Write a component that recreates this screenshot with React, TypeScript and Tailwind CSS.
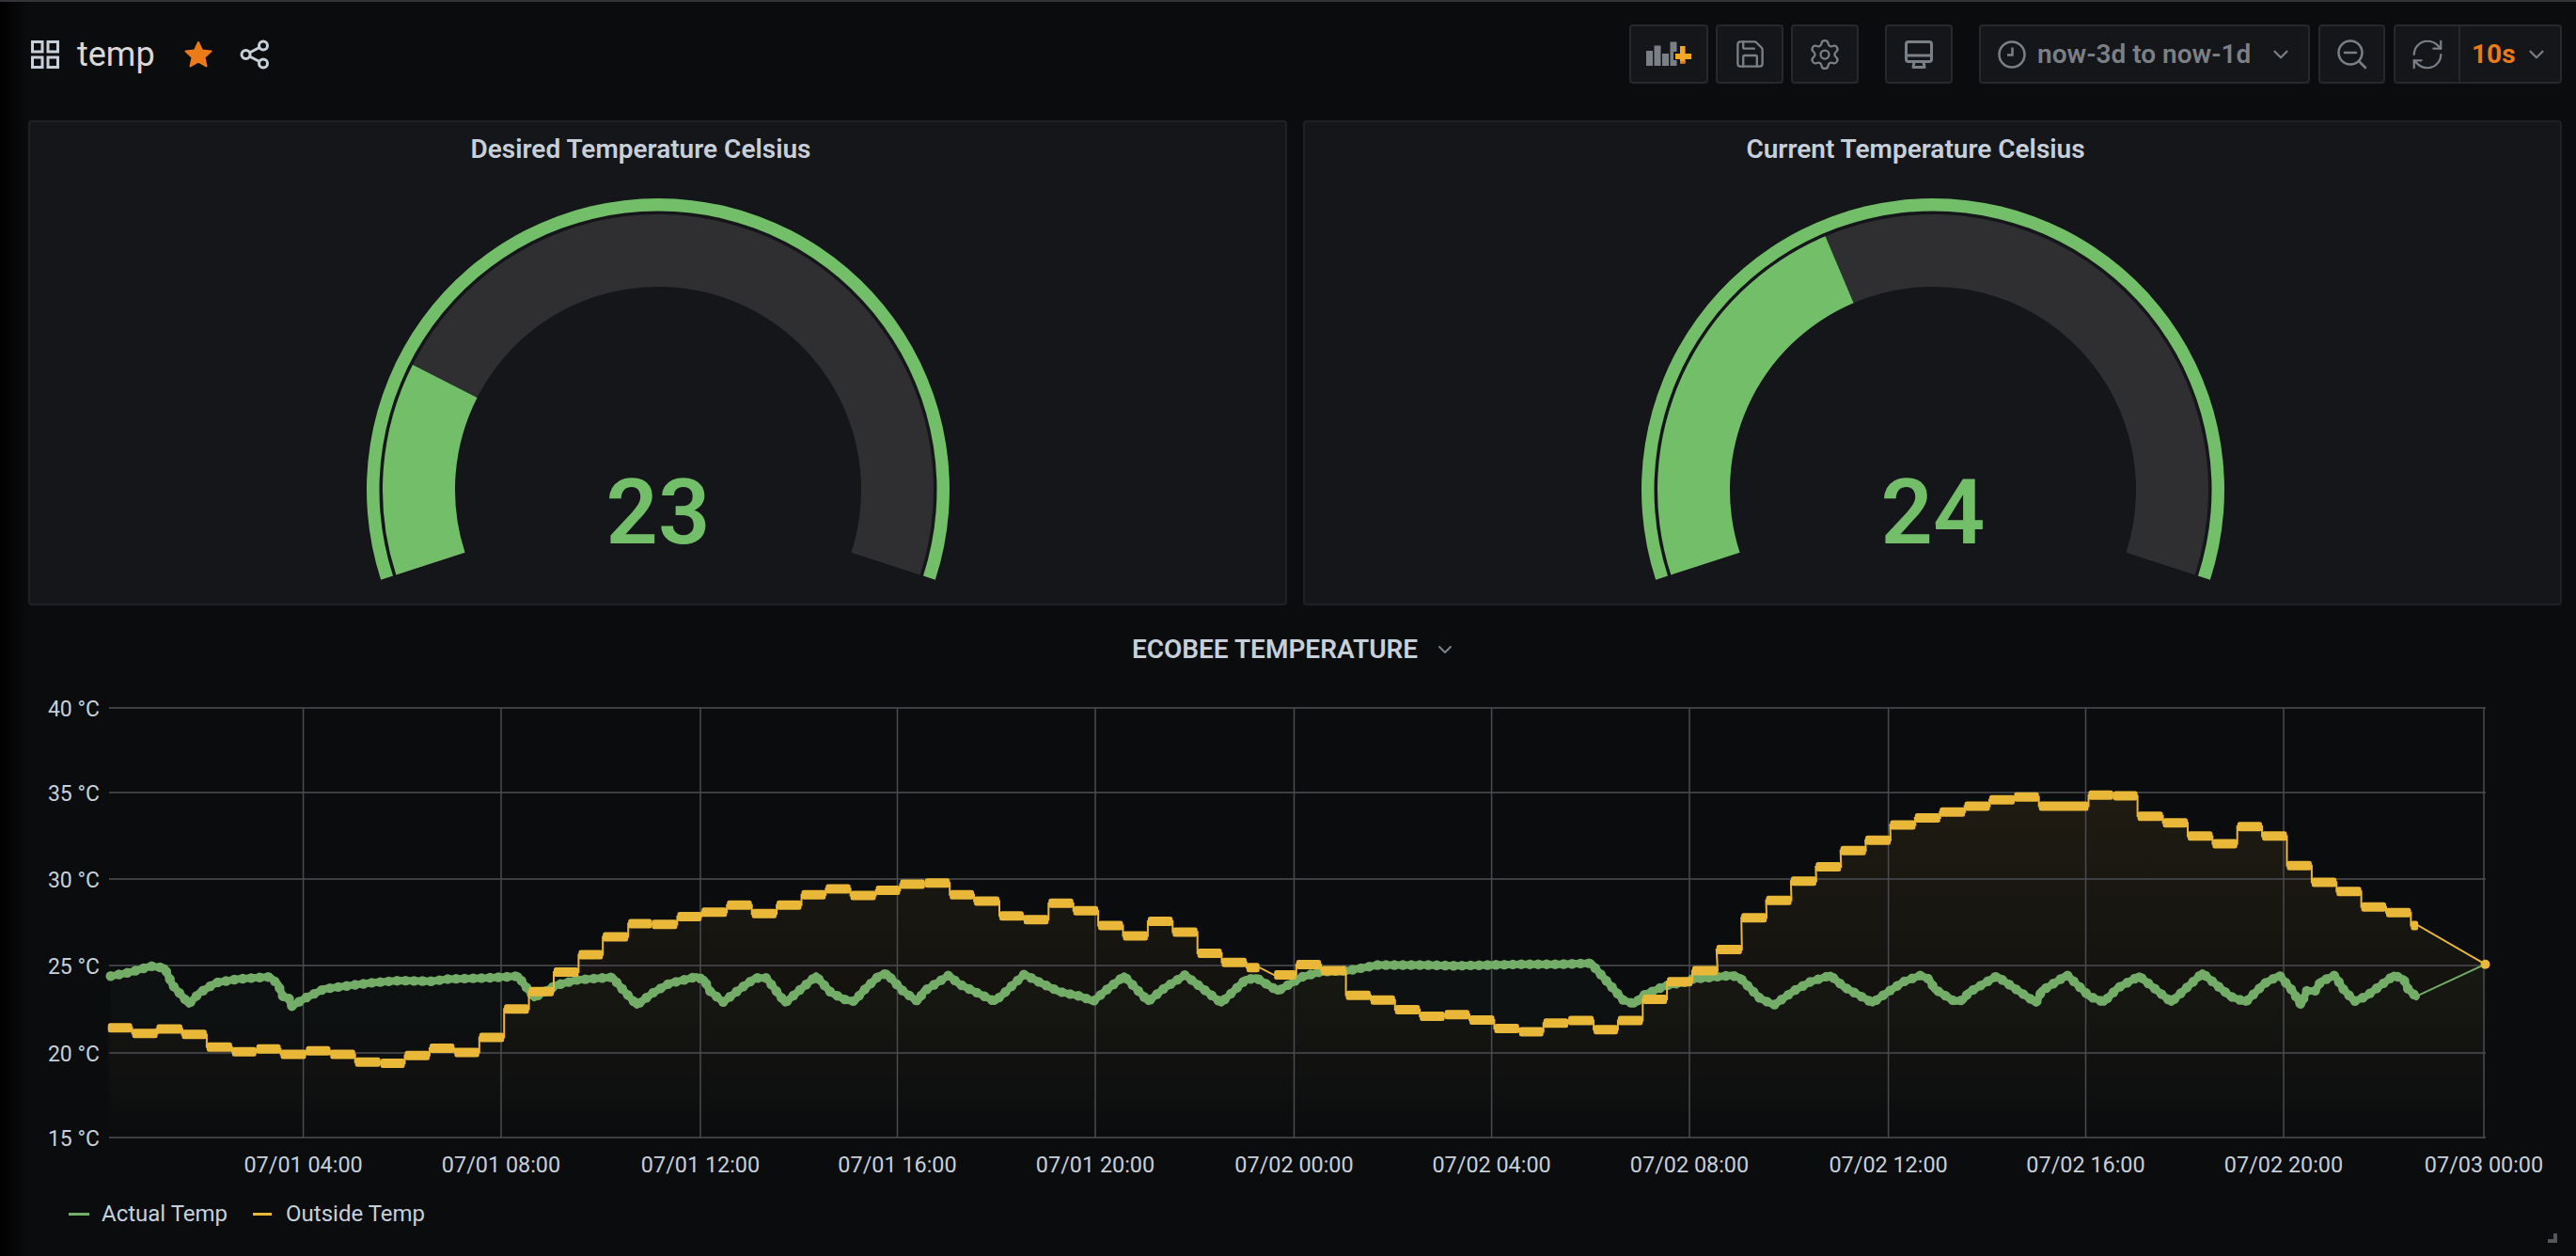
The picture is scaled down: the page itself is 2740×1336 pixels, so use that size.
import { ChevronDown, RefreshCw, Save, Settings } from "lucide-react";

const GREEN = "#73bf69";
const LINE_GREEN = "#73ad68";
const YELLOW = "#eab839";
const PLOT_TOP = 753;
const PLOT_BOTTOM = 1210;
const PLOT_LEFT = 116;
const PLOT_RIGHT = 2644;

// data read off the crops: [x1, x2, y] in crop coordinates, converted below
const y0 = (y: number) => 720 + y / 2.545;
const a = (x: number) => x / 1.742;
const b = (x: number) => 900 + x / 1.742;
const c = (x: number) => 1800 + x / 1.668;

const stepsA = [
  [200, 245, 950], [245, 292, 965], [290, 338, 953], [337, 383, 968], [383, 430, 1002], [430, 475, 1015],
  [475, 520, 1007], [520, 567, 1022], [567, 612, 1012], [612, 658, 1022], [658, 705, 1043], [705, 750, 1046],
  [750, 796, 1025], [796, 842, 1005], [842, 888, 1017], [888, 934, 976], [934, 980, 899], [980, 1026, 852],
  [1026, 1072, 799], [1072, 1117, 752], [1117, 1164, 704], [1164, 1208, 668], [1208, 1255, 670], [1255, 1300, 649],
  [1300, 1347, 637], [1347, 1393, 618], [1393, 1439, 641], [1439, 1485, 618], [1485, 1530, 590], [1530, 1576, 574],
];
const stepsB = [
  [8, 55, 592], [55, 100, 578], [100, 146, 561], [146, 192, 558], [192, 237, 590], [237, 284, 607], [284, 329, 647],
  [329, 375, 657], [375, 421, 613], [421, 467, 633], [467, 513, 673], [513, 559, 701], [559, 605, 662], [605, 651, 691],
  [651, 696, 748], [696, 742, 773], [742, 766, 787], [793, 834, 807], [834, 880, 779], [880, 926, 795], [926, 972, 862],
  [972, 1017, 875], [1017, 1063, 901], [1063, 1109, 919], [1109, 1155, 914], [1155, 1201, 929], [1201, 1247, 952],
  [1247, 1292, 961], [1292, 1338, 937], [1338, 1385, 930], [1385, 1430, 955], [1430, 1476, 930], [1476, 1521, 873],
  [1521, 1568, 825],
];
const stepsC = [
  [0, 45, 795], [43, 88, 738], [87, 132, 652], [131, 176, 605], [175, 220, 553], [219, 264, 514], [263, 308, 470],
  [307, 352, 442], [351, 396, 401], [395, 440, 382], [439, 484, 366], [483, 528, 350], [527, 572, 333], [571, 615, 325],
  [615, 703, 350], [703, 747, 320], [747, 790, 322], [790, 835, 377], [835, 879, 395], [879, 923, 431], [923, 967, 452],
  [967, 1011, 405], [1011, 1055, 431], [1055, 1099, 511], [1099, 1143, 556], [1143, 1187, 581], [1187, 1231, 623],
  [1231, 1275, 638], [1275, 1288, 673],
];
const steps = [
  ...stepsA.map(([x1, x2, y]) => [a(x1), a(x2), y0(y)]),
  ...stepsB.map(([x1, x2, y]) => [b(x1), b(x2), y0(y)]),
  ...stepsC.map(([x1, x2, y]) => [c(x1), c(x2), y0(y)]),
];

const greenA = [
  [205, 810], [240, 800], [280, 783], [305, 788], [312, 810], [320, 835], [350, 885], [370, 855], [400, 828], [440, 818],
  [500, 812], [515, 832], [525, 868], [535, 868], [540, 892], [565, 870], [600, 845], [650, 835], [690, 828], [740, 822],
  [800, 824], [830, 818], [900, 815], [960, 810], [975, 840], [990, 868], [1030, 835], [1070, 820], [1135, 813], [1150, 840],
  [1180, 888], [1210, 855], [1240, 830], [1290, 812], [1305, 820], [1315, 850], [1340, 880], [1380, 835], [1400, 815],
  [1420, 815], [1455, 882], [1480, 850], [1512, 810], [1540, 855], [1568, 875],
];
const greenB = [
  [15, 878], [35, 845], [60, 810], [75, 803], [105, 850], [132, 878], [145, 850], [190, 808], [210, 832], [275, 878],
  [290, 860], [330, 805], [360, 828], [395, 852], [435, 865], [458, 878], [480, 850], [515, 810], [560, 878], [590, 842],
  [628, 807], [695, 882], [740, 820], [760, 815], [800, 850], [845, 812], [880, 798], [930, 795], [985, 780], [1075, 780],
  [1130, 782], [1250, 778], [1320, 778], [1380, 775], [1410, 825], [1440, 875], [1460, 885], [1480, 860], [1520, 835],
  [1560, 825],
];
const greenC = [
  [0, 818], [70, 808], [85, 815], [120, 870], [145, 888], [180, 850], [210, 825], [245, 808], [270, 840], [320, 882],
  [345, 855], [375, 825], [405, 808], [420, 818], [430, 845], [465, 878], [480, 875], [490, 855], [540, 810], [610, 882],
  [620, 850], [665, 807], [705, 865], [730, 880], [755, 842], [793, 810], [850, 880], [905, 802], [955, 865], [982, 880],
  [1015, 830], [1042, 808], [1065, 850], [1080, 888], [1090, 850], [1105, 850], [1115, 825], [1140, 808], [1155, 845],
  [1175, 878], [1195, 865], [1245, 808], [1262, 818], [1270, 845], [1284, 865],
];
const green = [
  ...greenA.map(([x, y]) => [a(x), y0(y)]),
  ...greenB.map(([x, y]) => [b(x), y0(y)]),
  ...greenC.map(([x, y]) => [c(x), y0(y)]),
];

// the real series is a run of dots, so sample the line every few pixels
const greenDots: number[][] = [];
let carry = 0;
for (let i = 1; i < green.length; i++) {
  const [x1, y1] = green[i - 1];
  const [x2, y2] = green[i];
  const len = Math.hypot(x2 - x1, y2 - y1);
  let d = carry;
  while (d < len) {
    greenDots.push([x1 + ((x2 - x1) * d) / len, y1 + ((y2 - y1) * d) / len]);
    d += 9;
  }
  carry = d - len;
}

const endPoint = [c(1407), y0(778)];

const toPoints = (pts: number[][]) => pts.map((p) => `${p[0].toFixed(1)},${p[1].toFixed(1)}`).join(" ");

const yellowLine = steps.flatMap(([x1, x2, y]) => [[x1, y], [x2, y]]);
const yellowThin = toPoints([...yellowLine, endPoint]);
const yellowArea = toPoints([
  [yellowLine[0][0], PLOT_BOTTOM],
  ...yellowLine,
  endPoint,
  [endPoint[0], PLOT_BOTTOM],
]);
const greenArea = toPoints([[green[0][0], PLOT_BOTTOM], ...green, endPoint, [endPoint[0], PLOT_BOTTOM]]);

const yTicks = [
  { label: "40 °C", y: 753 },
  { label: "35 °C", y: 843 },
  { label: "30 °C", y: 935 },
  { label: "25 °C", y: 1027 },
  { label: "20 °C", y: 1120 },
  { label: "15 °C", y: 1210 },
];

const xTicks = [
  { label: "07/01 04:00", x: 322.6 },
  { label: "07/01 08:00", x: 533 },
  { label: "07/01 12:00", x: 745 },
  { label: "07/01 16:00", x: 954.5 },
  { label: "07/01 20:00", x: 1165 },
  { label: "07/02 00:00", x: 1376.5 },
  { label: "07/02 04:00", x: 1586.6 },
  { label: "07/02 08:00", x: 1797 },
  { label: "07/02 12:00", x: 2008.6 },
  { label: "07/02 16:00", x: 2218.5 },
  { label: "07/02 20:00", x: 2429 },
  { label: "07/03 00:00", x: 2642 },
];

function arc(cx: number, cy: number, rOut: number, rIn: number, from: number, to: number) {
  const pt = (r: number, deg: number) => {
    const t = (deg * Math.PI) / 180;
    return `${(cx - r * Math.cos(t)).toFixed(2)} ${(cy - r * Math.sin(t)).toFixed(2)}`;
  };
  const large = to - from > 180 ? 1 : 0;
  return `M${pt(rOut, from)} A${rOut} ${rOut} 0 ${large} 1 ${pt(rOut, to)} L${pt(rIn, to)} A${rIn} ${rIn} 0 ${large} 0 ${pt(rIn, from)} Z`;
}

function Gauge({ title, value, end }: { title: string; value: string; end: number }) {
  return (
    <div className="flex h-[516px] flex-1 flex-col items-center rounded-[4px] border-2 border-[#1f2125] bg-[#141619]">
      <div className="flex h-[57px] w-full items-center justify-center pr-[36px] text-[28px] font-semibold text-[#c7d0d9]">
        {title}
      </div>
      <svg className="mt-[13px]" width="640" height="430" viewBox="0 0 640 430">
        <path d={arc(320, 321, 310, 296.5, -18, 198)} fill={GREEN} />
        <path d={arc(320, 321, 293, 216, end, 198)} fill="#2f2f32" />
        <path d={arc(320, 321, 293, 216, -18, end)} fill={GREEN} />
        <text x="320" y="378" textAnchor="middle" fontSize="97" fontWeight="600" fill={GREEN}>
          {value}
        </text>
      </svg>
    </div>
  );
}

function ToolButton({ className, children }: { className: string; children: React.ReactNode }) {
  return (
    <div
      className={`flex h-[63px] items-center justify-center rounded-[4px] border-2 border-[#26282c] bg-[#141619] text-[#7b8087] ${className}`}
    >
      {children}
    </div>
  );
}

function Header() {
  return (
    <header className="mt-[24px] flex h-[63px] items-center justify-between pl-[33px] pr-[15px]">
      <div className="flex items-center">
        <svg width="30" height="30" viewBox="0 0 30 30" fill="none" stroke="#c7d0d9" strokeWidth="3">
          <rect x="1.5" y="1.5" width="10.5" height="10.5" />
          <rect x="18" y="1.5" width="10.5" height="10.5" />
          <rect x="1.5" y="18" width="10.5" height="10.5" />
          <rect x="18" y="18" width="10.5" height="10.5" />
        </svg>
        <span className="ml-[19px] text-[36px] leading-none text-[#d8d9da]">temp</span>
        <svg className="ml-[31px]" width="30" height="30" viewBox="0 0 30 30" fill="#eb7b18" stroke="#eb7b18" strokeWidth="2" strokeLinejoin="round">
          <path d="M15 2 L19 10.5 L28.5 11.5 L21.5 18 L23.5 27.5 L15 22.6 L6.5 27.5 L8.5 18 L1.5 11.5 L11 10.5 Z" />
        </svg>
        <svg className="ml-[29px]" width="32" height="32" viewBox="0 0 32 32" fill="none" stroke="#c7d0d9" strokeWidth="3">
          <circle cx="25" cy="6.5" r="4.5" />
          <circle cx="6.5" cy="16" r="4.5" />
          <circle cx="25" cy="25.5" r="4.5" />
          <path d="M10.5 14 L21 8.5 M10.5 18 L21 23.5" />
        </svg>
      </div>
      <div className="flex items-center">
        <ToolButton className="w-[84px]">
          <svg width="48" height="28" viewBox="0 0 48 28">
            <rect x="0" y="10" width="7" height="16" fill="#7b8087" />
            <rect x="8.5" y="4.5" width="7" height="21.5" fill="#7b8087" />
            <rect x="17" y="13" width="7" height="13" fill="#7b8087" />
            <rect x="25.5" y="0.5" width="7" height="25.5" fill="#7b8087" />
            <path d="M29 11 H34 V4 H43 V11 H48 V20 H43 V25 H34 V20 H29 Z" fill="#141619" />
            <path d="M31 13 H36 V5 H41.5 V13 H48 V19 H41.5 V23.5 H36 V19 H31 Z" fill="#f5a623" />
            <rect x="36" y="21" width="5.5" height="2.5" fill="#eb7b18" />
          </svg>
        </ToolButton>
        <ToolButton className="ml-[8px] w-[72px]">
          <Save size={35} strokeWidth={1.6} />
        </ToolButton>
        <ToolButton className="ml-[8px] w-[72px]">
          <Settings size={36} strokeWidth={1.5} />
        </ToolButton>
        <ToolButton className="ml-[28px] w-[72px]">
          <svg width="30" height="30" viewBox="0 0 30 30" fill="none" stroke="currentColor" strokeWidth="3" strokeLinejoin="round">
            <rect x="1.5" y="1.5" width="27" height="21" rx="2.5" />
            <path d="M1.5 16 H28.5" />
            <path d="M10 23 L9 28.5 H21 L20 23" />
          </svg>
        </ToolButton>
        <ToolButton className="ml-[28px] w-[352px] justify-start pl-[18px] pr-[16px]">
          <svg width="30" height="30" viewBox="0 0 30 30" fill="none" stroke="currentColor" strokeWidth="2.5">
            <circle cx="15" cy="15" r="13.5" />
            <path d="M15.5 7.5 V15.5 H10" />
          </svg>
          <span className="ml-[12px] flex-1 text-[28px] font-semibold leading-none">now-3d to now-1d</span>
          <ChevronDown size={26} strokeWidth={2} />
        </ToolButton>
        <ToolButton className="ml-[9px] w-[71px]">
          <svg width="32" height="32" viewBox="0 0 32 32" fill="none" stroke="currentColor" strokeWidth="2.5" strokeLinecap="round">
            <circle cx="14" cy="14" r="12.5" />
            <path d="M8 14 H20" />
            <path d="M23.5 23.5 L30 30" />
          </svg>
        </ToolButton>
        <div className="ml-[9px] flex h-[63px] w-[179px] items-center rounded-[4px] border-2 border-[#26282c] bg-[#141619] text-[#7b8087]">
          <div className="flex h-full w-[69px] items-center justify-center border-r-2 border-[#26282c]">
            <RefreshCw size={38} strokeWidth={1.4} />
          </div>
          <span className="ml-[12px] text-[28px] font-bold leading-none text-[#eb7b18]">10s</span>
          <ChevronDown className="ml-[9px]" size={26} strokeWidth={2} />
        </div>
      </div>
    </header>
  );
}

function Chart() {
  return (
    <svg className="block" width="2740" height="534" viewBox="0 720 2740 534">
      <defs>
        <linearGradient id="fillYellow" gradientUnits="userSpaceOnUse" x1="0" y1={PLOT_TOP} x2="0" y2={PLOT_BOTTOM}>
          <stop offset="0" stopColor={YELLOW} stopOpacity="0.11" />
          <stop offset="1" stopColor={YELLOW} stopOpacity="0" />
        </linearGradient>
        <linearGradient id="fillGreen" gradientUnits="userSpaceOnUse" x1="0" y1={PLOT_TOP + 200} x2="0" y2={PLOT_BOTTOM}>
          <stop offset="0" stopColor={LINE_GREEN} stopOpacity="0.05" />
          <stop offset="1" stopColor={LINE_GREEN} stopOpacity="0" />
        </linearGradient>
      </defs>
      <polygon points={greenArea} fill="url(#fillGreen)" />
      <polygon points={yellowArea} fill="url(#fillYellow)" />
      {yTicks.map((t) => (
        <g key={t.label}>
          <line x1={PLOT_LEFT} x2={PLOT_RIGHT} y1={t.y} y2={t.y} stroke="#3d3e41" strokeWidth="2" />
          <text x="106" y={t.y + 9} textAnchor="end" fontSize="23" fill="#c7d0d9">
            {t.label}
          </text>
        </g>
      ))}
      {xTicks.map((t) => (
        <g key={t.label}>
          <line x1={t.x} x2={t.x} y1={PLOT_TOP} y2={PLOT_BOTTOM} stroke="#4a4b4e" strokeWidth="1.5" />
          <text x={t.x} y="1247" textAnchor="middle" fontSize="23.4" fill="#c7d0d9">
            {t.label}
          </text>
        </g>
      ))}
      <polyline points={toPoints([...green.slice(-1), endPoint])} fill="none" stroke={LINE_GREEN} strokeWidth="2" />
      <polyline points={toPoints(green)} fill="none" stroke={LINE_GREEN} strokeWidth="8" strokeLinejoin="round" strokeLinecap="round" />
      {greenDots.map(([x, y]) => (
        <circle key={`${x}-${y}`} cx={x} cy={y} r="5.2" fill={LINE_GREEN} />
      ))}
      <polyline points={yellowThin} fill="none" stroke={YELLOW} strokeWidth="2" />
      {steps.map(([x1, x2, y]) => (
        <rect key={`${x1}-${y}`} x={x1} y={y - 5} width={x2 - x1} height="10" rx="2.5" fill={YELLOW} />
      ))}
      <circle cx={endPoint[0]} cy={endPoint[1]} r="5" fill={YELLOW} />
    </svg>
  );
}

function Legend() {
  return (
    <div className="flex items-center pl-[73px] pt-[25px] text-[24px] leading-none text-[#c7d0d9]">
      <span className="h-[3px] w-[22px]" style={{ background: LINE_GREEN }} />
      <span className="ml-[13px]">Actual Temp</span>
      <span className="ml-[27px] h-[3px] w-[20px]" style={{ background: YELLOW }} />
      <span className="ml-[15px]">Outside Temp</span>
    </div>
  );
}

export default function App() {
  return (
    <div
      className="relative h-[1336px] w-[2740px] overflow-hidden border-t-2 border-[#333437] bg-[#0b0c0e]"
      style={{ fontFamily: "Roboto, sans-serif" }}
    >
      <div className="absolute inset-y-0 left-0 w-[30px] bg-gradient-to-r from-black to-transparent" />
      <Header />
      <div className="relative mt-[39px] flex gap-[17px] pl-[30px] pr-[15px]">
        <Gauge title="Desired Temperature Celsius" value="23" end={27} />
        <Gauge title="Current Temperature Celsius" value="24" end={67} />
      </div>
      <div className="relative flex h-[76px] items-center justify-center pl-[13px] pt-[18px] text-[28px] font-semibold text-[#c7d0d9]">
        ECOBEE TEMPERATURE
        <ChevronDown className="ml-[17px] text-[#7b8087]" size={24} strokeWidth={2} />
      </div>
      <div className="relative">
        <Chart />
        <Legend />
      </div>
      <div className="absolute left-[2710px] top-[1310px] h-[10px] w-[10px] border-b-[4px] border-r-[4px] border-[#55565a]" />
    </div>
  );
}
